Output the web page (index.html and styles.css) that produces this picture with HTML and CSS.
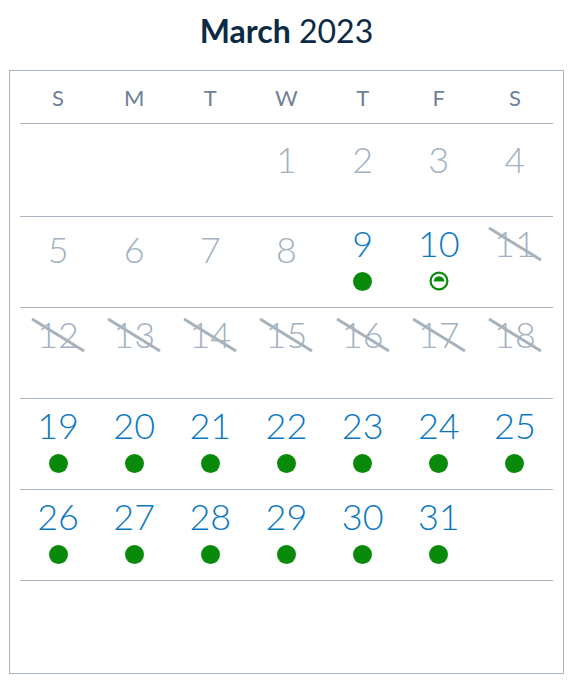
FILE: index.html
```html
<!DOCTYPE html>
<html lang="en">
<head>
<meta charset="utf-8">
<title>March 2023</title>
<link rel="stylesheet" href="styles.css">
</head>
<body>
<h1 class="title"><span class="month">March</span> 2023</h1>
<div class="calendar">
  <div class="weekdays">
    <span>S</span><span>M</span><span>T</span><span>W</span><span>T</span><span>F</span><span>S</span>
  </div>
  <div class="week week-first">
    <div class="day"></div>
    <div class="day"></div>
    <div class="day"></div>
    <div class="day past"><span class="num">1</span></div>
    <div class="day past"><span class="num">2</span></div>
    <div class="day past"><span class="num">3</span></div>
    <div class="day past"><span class="num">4</span></div>
  </div>
  <div class="week">
    <div class="day past"><span class="num">5</span></div>
    <div class="day past"><span class="num">6</span></div>
    <div class="day past"><span class="num">7</span></div>
    <div class="day past"><span class="num">8</span></div>
    <div class="day open"><span class="num">9</span><span class="dot"></span></div>
    <div class="day open"><span class="num">10</span>
      <svg class="limited" viewBox="0 0 20 20" width="20" height="20" aria-hidden="true">
        <circle cx="10" cy="10" r="8.4" fill="none" stroke="#0a8a0a" stroke-width="2.2"/>
        <path d="M4.6 10.6 A5.4 5.4 0 0 1 15.4 10.6 Z" fill="#0a8a0a"/>
      </svg>
    </div>
    <div class="day closed"><span class="num">11</span></div>
  </div>
  <div class="week">
    <div class="day closed"><span class="num">12</span></div>
    <div class="day closed"><span class="num">13</span></div>
    <div class="day closed"><span class="num">14</span></div>
    <div class="day closed"><span class="num">15</span></div>
    <div class="day closed"><span class="num">16</span></div>
    <div class="day closed"><span class="num">17</span></div>
    <div class="day closed"><span class="num">18</span></div>
  </div>
  <div class="week">
    <div class="day open"><span class="num">19</span><span class="dot"></span></div>
    <div class="day open"><span class="num">20</span><span class="dot"></span></div>
    <div class="day open"><span class="num">21</span><span class="dot"></span></div>
    <div class="day open"><span class="num">22</span><span class="dot"></span></div>
    <div class="day open"><span class="num">23</span><span class="dot"></span></div>
    <div class="day open"><span class="num">24</span><span class="dot"></span></div>
    <div class="day open"><span class="num">25</span><span class="dot"></span></div>
  </div>
  <div class="week">
    <div class="day open"><span class="num">26</span><span class="dot"></span></div>
    <div class="day open"><span class="num">27</span><span class="dot"></span></div>
    <div class="day open"><span class="num">28</span><span class="dot"></span></div>
    <div class="day open"><span class="num">29</span><span class="dot"></span></div>
    <div class="day open"><span class="num">30</span><span class="dot"></span></div>
    <div class="day open"><span class="num">31</span><span class="dot"></span></div>
    <div class="day"></div>
  </div>
</div>
</body>
</html>
```
FILE: styles.css
```css
* { box-sizing: border-box; }

body {
  margin: 0;
  padding-top: 11px;
  font-family: Lato, "Open Sans", sans-serif;
  background: #ffffff;
}

.title {
  margin: 0 0 19px;
  height: 40px;
  line-height: 40px;
  font-size: 32px;
  font-weight: 400;
  text-align: center;
  color: #0c2a44;
}

.title .month {
  font-weight: 700;
}

.calendar {
  margin: 0 9px;
  height: 604px;
  padding: 0 10px;
  border: 1px solid #a9b5c2;
}

.weekdays {
  display: grid;
  grid-template-columns: repeat(7, 1fr);
  height: 53px;
  align-items: center;
  border-bottom: 1px solid #a9b5c2;
}

.weekdays span {
  text-align: center;
  font-size: 22px;
  color: #6e7f96;
}

.week {
  display: grid;
  grid-template-columns: repeat(7, 1fr);
  height: 91px;
  border-bottom: 1px solid #a9b5c2;
}

.week-first {
  height: 93px;
}

.day {
  display: flex;
  flex-direction: column;
  align-items: center;
  padding-top: 8px;
}

.day.past {
  padding-top: 14px;
}

.week-first .day.past {
  padding-top: 17px;
}

.num {
  position: relative;
  font-size: 36px;
  line-height: 36px;
  font-weight: 300;
  color: #a3b1c2;
}

.open .num {
  color: #0b78be;
}

.closed .num::after {
  content: "";
  position: absolute;
  left: 50%;
  top: 50%;
  width: 61px;
  height: 3px;
  margin-top: 1px;
  background: #a7b3bc;
  transform: translate(-50%, -50%) rotate(31.6deg);
}

.dot {
  width: 19px;
  height: 19px;
  margin-top: 11px;
  border-radius: 50%;
  background: #0a8a0a;
}

.limited {
  margin-top: 10px;
  width: 20px;
  height: 20px;
}
```
